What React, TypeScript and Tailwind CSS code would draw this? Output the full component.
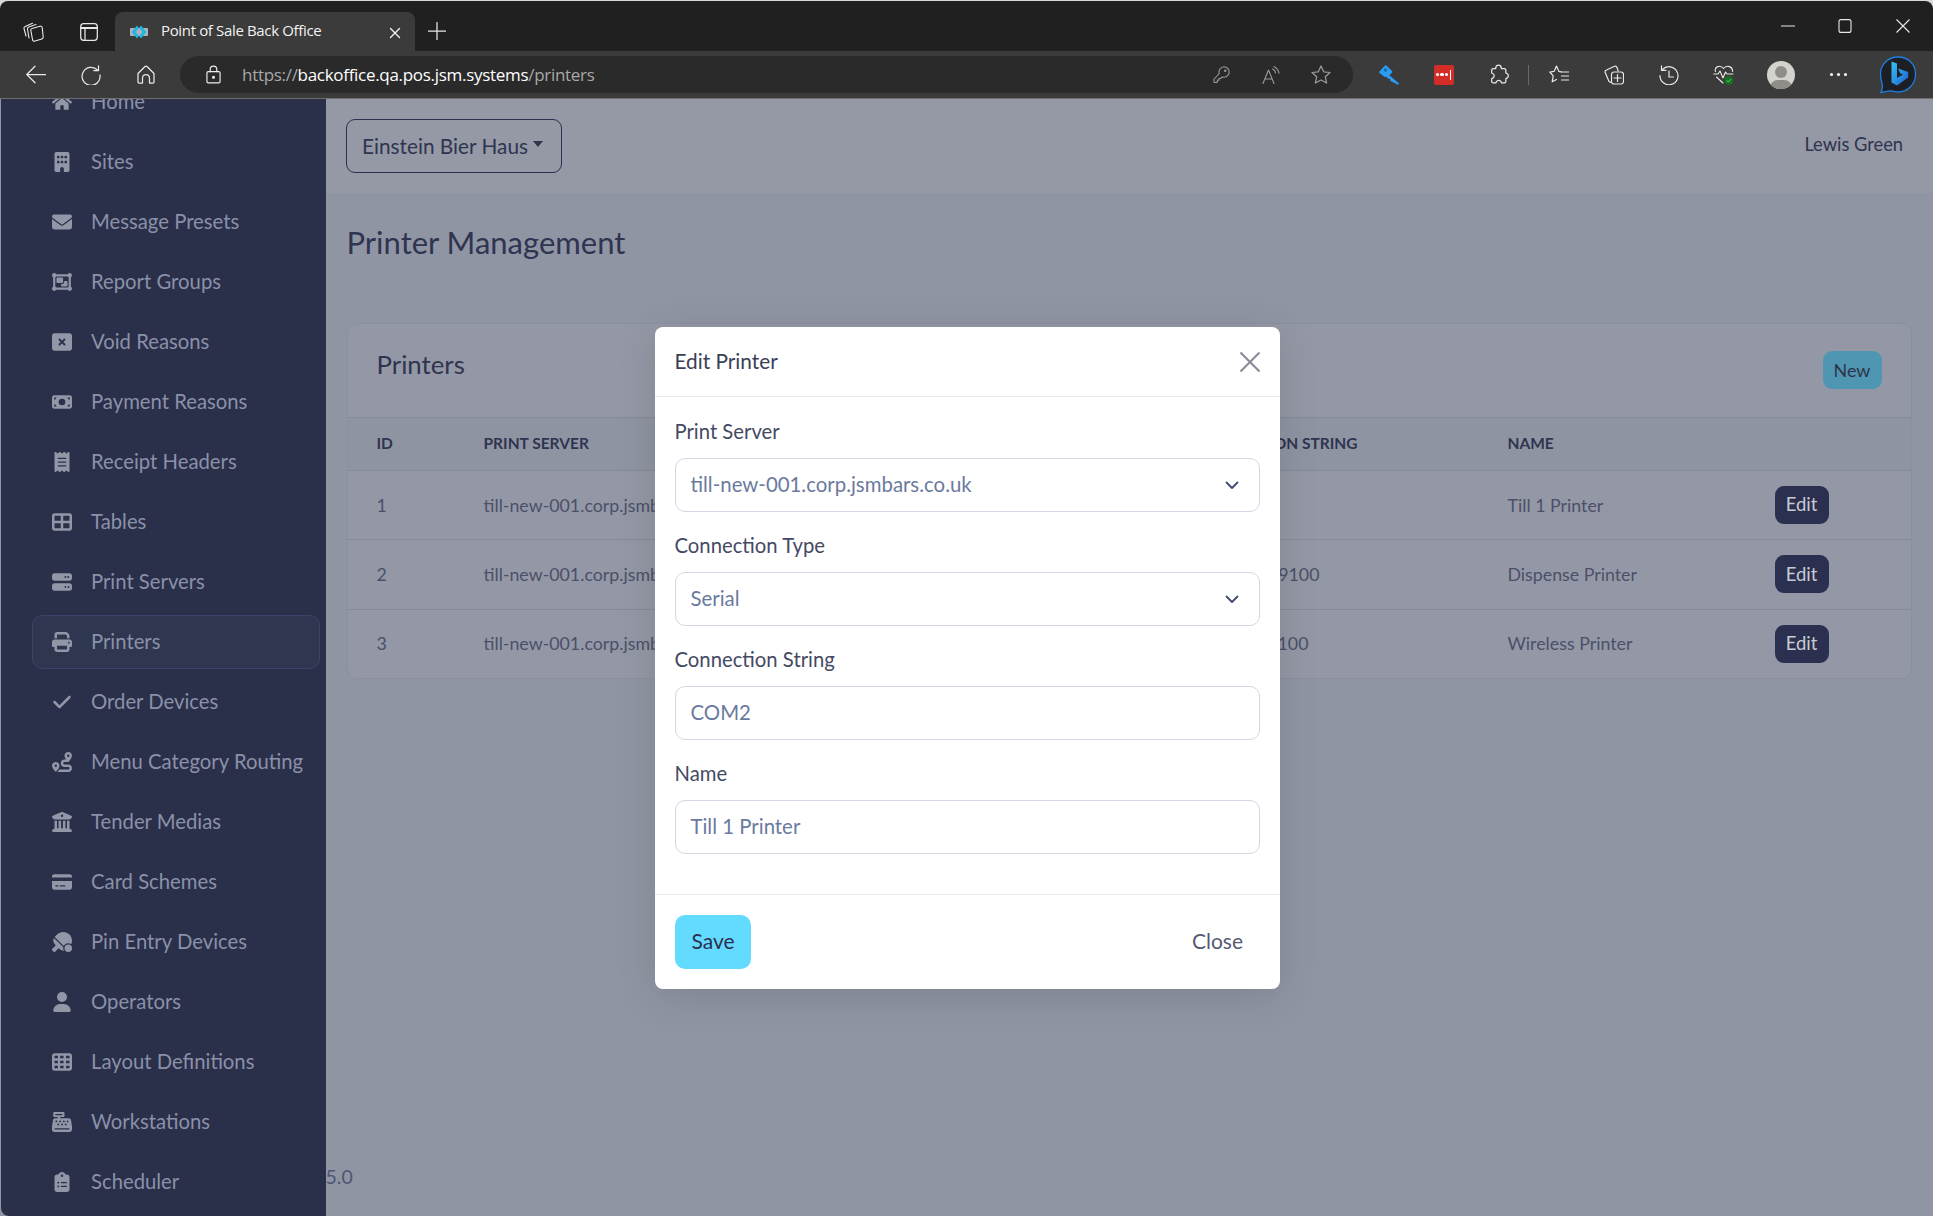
import React from "react";
import { FaHome } from "react-icons/fa";
import {
  FaBuilding,
  FaBuildingColumns,
  FaCashRegister,
  FaCheck,
  FaClipboardList,
  FaCreditCard,
  FaEnvelope,
  FaMoneyBill,
  FaObjectGroup,
  FaPrint,
  FaReceipt,
  FaRectangleXmark,
  FaRoute,
  FaServer,
  FaTableCells,
  FaTableCellsLarge,
  FaTableTennisPaddleBall,
  FaUser,
} from "react-icons/fa6";

const navItems = [
  { label: "Home", icon: FaHome },
  { label: "Sites", icon: FaBuilding },
  { label: "Message Presets", icon: FaEnvelope },
  { label: "Report Groups", icon: FaObjectGroup },
  { label: "Void Reasons", icon: FaRectangleXmark },
  { label: "Payment Reasons", icon: FaMoneyBill },
  { label: "Receipt Headers", icon: FaReceipt },
  { label: "Tables", icon: FaTableCellsLarge },
  { label: "Print Servers", icon: FaServer },
  { label: "Printers", icon: FaPrint, active: true },
  { label: "Order Devices", icon: FaCheck },
  { label: "Menu Category Routing", icon: FaRoute },
  { label: "Tender Medias", icon: FaBuildingColumns },
  { label: "Card Schemes", icon: FaCreditCard },
  { label: "Pin Entry Devices", icon: FaTableTennisPaddleBall },
  { label: "Operators", icon: FaUser },
  { label: "Layout Definitions", icon: FaTableCells },
  { label: "Workstations", icon: FaCashRegister },
  { label: "Scheduler", icon: FaClipboardList },
];

const printers = [
  { id: 1, conn: "COM2", connWidth: "w-[60px]", name: "Till 1 Printer" },
  { id: 2, conn: "10.10.1.50:9100", connWidth: "w-[145px]", name: "Dispense Printer" },
  { id: 3, conn: "10.10.1.5:9100", connWidth: "w-[134px]", name: "Wireless Printer" },
];

const chromeStroke = {
  fill: "none",
  stroke: "currentColor",
  strokeWidth: 1.25,
  strokeLinecap: "round" as const,
  strokeLinejoin: "round" as const,
};

function Slot({ children, className = "" }: { children: React.ReactNode; className?: string }) {
  return <div className={`flex w-[55px] shrink-0 items-center justify-center text-[#e8e8e8] ${className}`}>{children}</div>;
}

function TabStrip() {
  return (
    <div className="flex h-[50px] shrink-0 items-end bg-[#202020]">
      <div className="flex h-[39px] w-[115px] shrink-0 items-center text-[#e8e8e8]">
        <Slot className="ml-[6px] w-[53px]">
          <svg width="21" height="20" viewBox="0 0 21 20" {...chromeStroke} strokeWidth="1.1">
            <path d="M9 6.500l8-2.300a1.800 1.800 0 0 1 2.200 1.300l1 9.500a1.800 1.800 0 0 1-1.300 1.900l-7 2.200a1.800 1.800 0 0 1-2.300-1.300L7.800 8.500A1.800 1.800 0 0 1 9 6.500z" />
            <path d="M6 16 4.500 7a1.800 1.800 0 0 1 1.200-2L13 2.500" />
            <path d="M3 14 1 6.500a1.800 1.800 0 0 1 1.200-2L9.500 1.200" />
          </svg>
        </Slot>
        <Slot>
          <svg width="18" height="18" viewBox="0 0 18 18" {...chromeStroke}>
            <rect x="0.700" y="0.700" width="16.600" height="16.600" rx="3" />
            <path d="M1 5h16" strokeWidth="2" />
            <path d="M5 5v12" />
          </svg>
        </Slot>
      </div>
      <div className="flex h-[39px] w-[300px] shrink-0 items-center rounded-t-[8px] bg-[#3b3b3b] pl-[15px] pr-[12px] font-['Open_Sans',sans-serif] text-[15px] tracking-[-0.35px] text-[#f2f2f2]">
        <svg width="18" height="14" viewBox="0 0 18 14" className="mr-[13px] shrink-0">
          <rect x="0" y="3" width="18" height="8" rx="1" fill="#aeb4ba" />
          <path d="M7 0.500 1.500 7 7 13.500 8.800 11 5.500 7l3.300-4z" fill="#1fb6e6" />
          <path d="M11 0.500 16.500 7 11 13.500 9.200 11l3.300-4-3.300-4z" fill="#1fb6e6" />
        </svg>
        <span className="-mt-[2px] flex-1 whitespace-nowrap">Point of Sale Back Office</span>
        <svg width="12" height="12" viewBox="0 0 12 12" className="mr-[2px] mt-[2px]" {...chromeStroke} strokeWidth="1.4">
          <path d="M1.500 1.500l9 9M10.500 1.500l-9 9" />
        </svg>
      </div>
      <div className="flex h-[50px] flex-1 items-center text-[#e8e8e8]">
        <svg width="18" height="18" viewBox="0 0 18 18" className="ml-[13px] mt-[10px]" {...chromeStroke}>
          <path d="M9 0.500v17M0.500 9h17" />
        </svg>
        <div className="flex-1" />
        <svg width="14" height="2" viewBox="0 0 14 2" className="mr-[43px]">
          <path d="M0 1h14" stroke="currentColor" strokeWidth="1.200" />
        </svg>
        <svg width="14" height="14" viewBox="0 0 14 14" className="mr-[44px]" fill="none" stroke="currentColor" strokeWidth="1.100">
          <rect x="1" y="0.600" width="12" height="12.800" rx="2" />
        </svg>
        <svg width="14" height="14" viewBox="0 0 14 14" className="mr-[23px]" fill="none" stroke="currentColor" strokeWidth="1.100">
          <path d="M0.500 0.500l13 13M13.500 0.500l-13 13" />
        </svg>
      </div>
    </div>
  );
}

function Toolbar() {
  return (
    <div className="flex h-[48px] shrink-0 items-center border-b border-[#6e6e6e] bg-[#3b3b3b] pl-[8px]">
      <Slot>
        <svg width="20" height="19" viewBox="0 0 20 19" {...chromeStroke}>
          <path d="M19.500 9.500H0.800M9 1.200 0.800 9.500 9 17.800" />
        </svg>
      </Slot>
      <Slot>
        <svg width="20" height="20" viewBox="0 0 20 20" {...chromeStroke}>
          <path d="M16.500 5A9 9 0 1 0 19 10" />
          <path d="M17.500 0.800v4.700h-4.700" />
        </svg>
      </Slot>
      <Slot>
        <svg width="18" height="19" viewBox="0 0 18 19" {...chromeStroke}>
          <path d="M1 8.500 8 1.500a1.400 1.400 0 0 1 2 0l7 7v8.500a1 1 0 0 1-1 1h-3.500v-5a3.500 3.500 0 0 0-7 0v5H2a1 1 0 0 1-1-1z" />
        </svg>
      </Slot>
      <div className="ml-[7px] flex h-[37px] w-[1173px] shrink-0 items-center rounded-full bg-[#2a2a2a] pl-[26px] pr-[7px]">
        <svg width="15" height="19" viewBox="0 0 16 20" className="mr-[21px] shrink-0 text-[#eeeeee]" {...chromeStroke}>
          <rect x="1" y="7" width="14" height="12" rx="1.500" />
          <path d="M4.500 7V4.500a3.500 3.500 0 0 1 7 0V7" />
          <circle cx="8" cy="13" r="1" fill="currentColor" />
        </svg>
        <span className="flex-1 whitespace-nowrap font-['Open_Sans',sans-serif] text-[17px] tracking-[-0.3px] text-[#a8a8a8]">
          https://<span className="text-white">backoffice.qa.pos.jsm.systems</span>/printers
        </span>
        <div className="flex w-[50px] justify-center text-[#9a9a9a]">
          <svg width="17" height="17" viewBox="0 0 17 17" {...chromeStroke} strokeWidth="1.100">
            <path d="M11 0.800a5.200 5.200 0 1 1-1.800 10.100L7.500 12.500H6v1.600H4.500v1.400l-1 1H1.200l-.4-3L6.200 7.500A5.200 5.200 0 0 1 11 0.800z" />
            <circle cx="12.200" cy="4.800" r="0.700" />
          </svg>
        </div>
        <div className="flex w-[50px] justify-center text-[#9a9a9a]">
          <svg width="19" height="18" viewBox="0 0 19 18" {...chromeStroke} strokeWidth="1.100">
            <path d="M1 17.500 6.500 4 12 17.500M3 13h7" />
            <path d="M10.500 3c1.500.5 2.800 2 3 4M12 0.800c2.500 1 4.500 3.500 5 6.500" />
          </svg>
        </div>
        <div className="flex w-[50px] justify-center text-[#9a9a9a]">
          <svg width="20" height="19" viewBox="0 0 20 19" {...chromeStroke}>
            <path d="M10 1l2.700 5.800 6.300.7-4.700 4.300 1.300 6.200L10 15l-5.600 3 1.300-6.200L1 7.500l6.300-.7z" />
          </svg>
        </div>
      </div>
      <Slot className="ml-[8px]">
        <svg width="20" height="20" viewBox="0 0 20 20">
          <path d="M0.500 6.500 6 0.500a1 1 0 0 1 1.400 0L13 6a1 1 0 0 1 0 1.400l-2.600 2.800 9.100 7.800a1 1 0 0 1 .1 1.300l-.6.500-7.500-3.800-.8-2.300-2-.2-1.200-1.800-1.800.2L0.500 7.900a1 1 0 0 1 0-1.400z" fill="#2a9df0" />
          <circle cx="6.500" cy="5" r="1.700" fill="#1668b0" />
        </svg>
      </Slot>
      <Slot>
        <div className="flex h-[20px] w-[20px] items-center justify-center gap-[1px] rounded-[2px] bg-[#d32d27]">
          <span className="h-[3.500px] w-[3.500px] rounded-full bg-white" />
          <span className="h-[3.500px] w-[3.500px] rounded-full bg-white" />
          <span className="h-[3.500px] w-[3.500px] rounded-full bg-white" />
          <span className="ml-px h-[10px] w-px bg-white" />
        </div>
      </Slot>
      <Slot>
        <svg width="21" height="21" viewBox="0 0 20 20" {...chromeStroke} strokeWidth="1.200">
          <path d="M7.500 3.500a2.500 2.500 0 0 1 5 0l.3 1h2.700a1.500 1.500 0 0 1 1.500 1.500v2.500l1 .5a2.500 2.500 0 0 1 0 4.500l-1 .5v2.500a1.500 1.500 0 0 1-1.500 1.500h-2.500l-.5-1a2.500 2.500 0 0 0-4.500 0l-.5 1H5A1.500 1.500 0 0 1 3.500 17v-3l1-.5a2.500 2.500 0 0 0 0-4.500l-1-.5V6A1.500 1.500 0 0 1 5 4.500h2.300z" />
        </svg>
      </Slot>
      <div className="flex h-[20px] w-[5px] shrink-0 justify-center">
        <div className="h-full w-px bg-[#6a6a6a]" />
      </div>
      <Slot>
        <svg width="20" height="20" viewBox="0 0 20 20" {...chromeStroke} strokeWidth="1.200">
          <path d="M12 6.800 9.800 6.300 7.500 1 5.200 6.300 0.800 7 4.200 10.800 3.200 16.800 7.500 14.500" />
          <path d="M12.500 7h7M12.500 11h7M12.500 15h7" />
        </svg>
      </Slot>
      <Slot>
        <svg width="20" height="20" viewBox="0 0 20 20" {...chromeStroke} strokeWidth="1.200">
          <rect x="7.500" y="7" width="12" height="12" rx="2.500" />
          <path d="M7 17.500 5 16.500 1.200 7.500a2 2 0 0 1 1.300-2.500L10.500 1.200a2 2 0 0 1 2.500 1.300l1.200 3.500" />
          <path d="M13.500 9.500v7M10 13h7" />
        </svg>
      </Slot>
      <Slot>
        <svg width="20" height="20" viewBox="0 0 20 20" {...chromeStroke} strokeWidth="1.200">
          <path d="M3.500 4.500A9 9 0 1 1 1 10.500" />
          <path d="M2.500 0.800v4.500H7" />
          <path d="M10 6v6h4.500" />
        </svg>
      </Slot>
      <Slot>
        <svg width="21" height="20" viewBox="0 0 21 20">
          <g {...chromeStroke} strokeWidth="1.100">
            <path d="M2.500 6.500C1 2 7 -1 10.500 3.500 14 -1 20 2 19.500 6.500" />
            <path d="M3.500 12 10 18" />
            <path d="M0.800 9h4.200l2-3 3 7 2.500-6 1.500 2h6" />
          </g>
          <circle cx="15.800" cy="15.500" r="4.500" fill="#15701f" />
          <path d="m13.800 15.500 1.500 1.500 2.500-2.800" fill="none" stroke="#6fd07a" strokeWidth="1" />
        </svg>
      </Slot>
      <Slot className="ml-[2px]">
        <div className="flex h-[28px] w-[28px] flex-col items-center overflow-hidden rounded-full bg-[#d4d2cd]">
          <div className="mt-[5px] h-[12px] w-[12px] shrink-0 rounded-full bg-[#8f8d88]" />
          <div className="mt-[2px] h-[16px] w-[22px] shrink-0 rounded-full bg-[#8f8d88]" />
        </div>
      </Slot>
      <Slot className="ml-[3px]">
        <div className="flex gap-[3.500px]">
          <span className="h-[3.500px] w-[3.500px] rounded-full bg-white" />
          <span className="h-[3.500px] w-[3.500px] rounded-full bg-white" />
          <span className="h-[3.500px] w-[3.500px] rounded-full bg-white" />
        </div>
      </Slot>
      <Slot className="ml-[4px]">
        <svg width="38" height="38" viewBox="0 0 38 38">
          <defs>
            <linearGradient id="bingFill" x1="0" y1="0" x2="1" y2="1">
              <stop offset="0" stopColor="#37c2f5" />
              <stop offset="1" stopColor="#1a62d0" />
            </linearGradient>
          </defs>
          <path d="M19 1C9 1 1.500 8.500 1.500 18c0 5 1.500 9 2 12 .3 2-1 4-1.500 6.500 4-1 8-2 11-1.500 2 .4 4 1 6 1 10 0 17.500-8 17.500-18S29 1 19 1z" fill="#1d1f24" stroke="#1d7fe0" strokeWidth="1.300" />
          <path d="M12.500 5.500l5.500 2V22l6-3.400-3-1.400-1.800-4.700 10 3.500v5.500L18 29.500l-5.500-3z" fill="url(#bingFill)" />
        </svg>
      </Slot>
    </div>
  );
}

function Sidebar() {
  return (
    <div className="ml-px h-full w-[325px] shrink-0 overflow-hidden rounded-bl-[8px] bg-[#2a2f4a] font-['Lato',sans-serif] text-[20.300px] text-[#8a91a8]">
      <div className="-mt-[27px]">
        {navItems.map((item) => {
          const Icon = item.icon;
          return (
            <div key={item.label} className="flex h-[60px] items-center">
              <div
                className={`ml-[31px] flex h-[54px] w-[288px] items-center rounded-[10px] border pl-[14px] ${
                  item.active ? "border-[#3a4468] bg-[#2f3650]" : "border-transparent"
                }`}
              >
                <div className="flex w-[30px] justify-center text-[#9297a8]">
                  <Icon className="h-[20px] w-auto" />
                </div>
                <span className="-mt-[2px] ml-[14px] whitespace-nowrap">{item.label}</span>
              </div>
            </div>
          );
        })}
      </div>
    </div>
  );
}

function TableRow({ id, conn, connWidth, name }: (typeof printers)[number]) {
  return (
    <div className="grid h-[69.330px] grid-cols-[107px_691px_333px_267px_1fr] items-center border-t border-[#868b9b] pl-[29px] text-[17.800px] text-[#4b5068]">
      <span>{id}</span>
      <span className="whitespace-nowrap">till-new-001.corp.jsmbars.co.uk</span>
      <span className={`${connWidth} whitespace-nowrap text-right`}>{conn}</span>
      <span className="whitespace-nowrap">{name}</span>
      <button className="flex h-[38px] w-[54px] items-center justify-center rounded-[9px] bg-[#2b3050] text-[18.500px] text-[#c9cbd3]">Edit</button>
    </div>
  );
}

function Main() {
  return (
    <div className="flex h-full min-w-0 flex-1 flex-col bg-[#9095a4] font-['Lato',sans-serif] text-[#2c3149]">
      <div className="flex h-[94px] shrink-0 items-center justify-between bg-[#9599a6] pl-[20px] pr-[30px]">
        <div className="flex h-[54px] w-[216px] items-center rounded-[9px] border border-[#2b3050] pl-[15px] text-[20.800px] text-[#2f3450]">
          Einstein Bier Haus
          <span className="ml-[5px] mt-[-5px] h-0 w-0 border-x-[5.500px] border-t-[6px] border-x-transparent border-t-[#2f3450]" />
        </div>
        <span className="-mt-[2px] text-[18.300px] text-[#2f3450]">Lewis Green</span>
      </div>
      <div className="flex flex-1 flex-col pl-[20.500px] pr-[21px]">
        <h1 className="mt-[28px] h-[42px] text-[31px] leading-[42px] text-[#2f3450]">Printer Management</h1>
        <div className="mt-[60px] w-[1565px] overflow-hidden rounded-[10px] border border-[#8b90a0] bg-[#9498a6]">
          <div className="flex h-[93px] items-start justify-between pl-[29px] pr-[30px]">
            <h2 className="mt-[21px] text-[25.800px] text-[#2f3450]">Printers</h2>
            <button className="mt-[27px] flex h-[38px] w-[59px] translate-x-[1px] items-center justify-center rounded-[9px] bg-[#4f96b2] text-[18px] text-[#2e3349]">New</button>
          </div>
          <div className="grid h-[53px] grid-cols-[107px_691px_333px_267px_1fr] items-center border-t border-[#868b9b] bg-[#8f94a3] pl-[29px] text-[15.500px] font-bold text-[#2f3450]">
            <span>ID</span>
            <span>PRINT SERVER</span>
            <span className="pl-[20px]">CONNECTION STRING</span>
            <span>NAME</span>
            <span />
          </div>
          {printers.map((printer) => (
            <TableRow key={printer.id} {...printer} />
          ))}
        </div>
        <div className="mb-[25px] -ml-[21px] mt-auto text-[19.500px] text-[#4d5674]">5.0</div>
      </div>
    </div>
  );
}

function Field({ label, value, select }: { label: string; value: string; select?: boolean }) {
  return (
    <div className="h-[114px]">
      <div className="h-[25px] text-[20.300px] leading-[25px] text-[#454a63]">{label}</div>
      <div className="mt-[14px] flex h-[54px] items-center justify-between rounded-[10px] border border-[#d2d6e3] pl-[15px] pr-[20px] text-[20.400px] text-[#6b7a9e]">
        <span className="-mt-[2px]">{value}</span>
        {select && (
          <svg width="14" height="9" viewBox="0 0 14 9" fill="none" stroke="#3f4a70" strokeWidth="1.800" strokeLinecap="round" strokeLinejoin="round">
            <path d="m1.500 1.500 5.500 5.500 5.500-5.500" />
          </svg>
        )}
      </div>
    </div>
  );
}

function EditModal() {
  return (
    <div className="absolute left-[655px] top-[327px] w-[625px] rounded-[8px] bg-white font-['Lato',sans-serif] shadow-[0_8px_40px_rgba(0,0,0,0.12)]">
      <div className="flex h-[70px] items-center justify-between border-b border-[#e8eaef] pl-[19.500px] pr-[19px]">
        <span className="-mt-[2px] text-[20.800px] text-[#3b4056]">Edit Printer</span>
        <svg width="22" height="22" viewBox="0 0 22 22" fill="none" stroke="#8a8d99" strokeWidth="2.200" className="mt-px">
          <path d="m1.500 1.500 19 19M20.500 1.500l-19 19" />
        </svg>
      </div>
      <div className="h-[497px] pl-[19.500px] pr-[20px] pt-[22px]">
        <Field label="Print Server" value="till-new-001.corp.jsmbars.co.uk" select />
        <Field label="Connection Type" value="Serial" select />
        <Field label="Connection String" value="COM2" />
        <Field label="Name" value="Till 1 Printer" />
      </div>
      <div className="flex h-[95px] items-center justify-between border-t border-[#e8eaef] pl-[20px] pr-[37px]">
        <button className="flex h-[54px] w-[76px] items-center justify-center rounded-[10px] bg-[#62dbff] pb-[3px] text-[21px] text-[#2b3050]">Save</button>
        <span className="-mt-[3px] text-[21px] text-[#555a72]">Close</span>
      </div>
    </div>
  );
}

export default function App() {
  return (
    <div className="relative flex h-[1216px] w-[1933px] flex-col overflow-hidden bg-[#d9d9d9]">
      <div className="mt-px flex flex-1 flex-col overflow-hidden rounded-t-[8px]">
        <TabStrip />
        <Toolbar />
        <div className="flex min-h-0 flex-1 bg-[#9095a4]">
          <Sidebar />
          <Main />
        </div>
      </div>
      <EditModal />
    </div>
  );
}
